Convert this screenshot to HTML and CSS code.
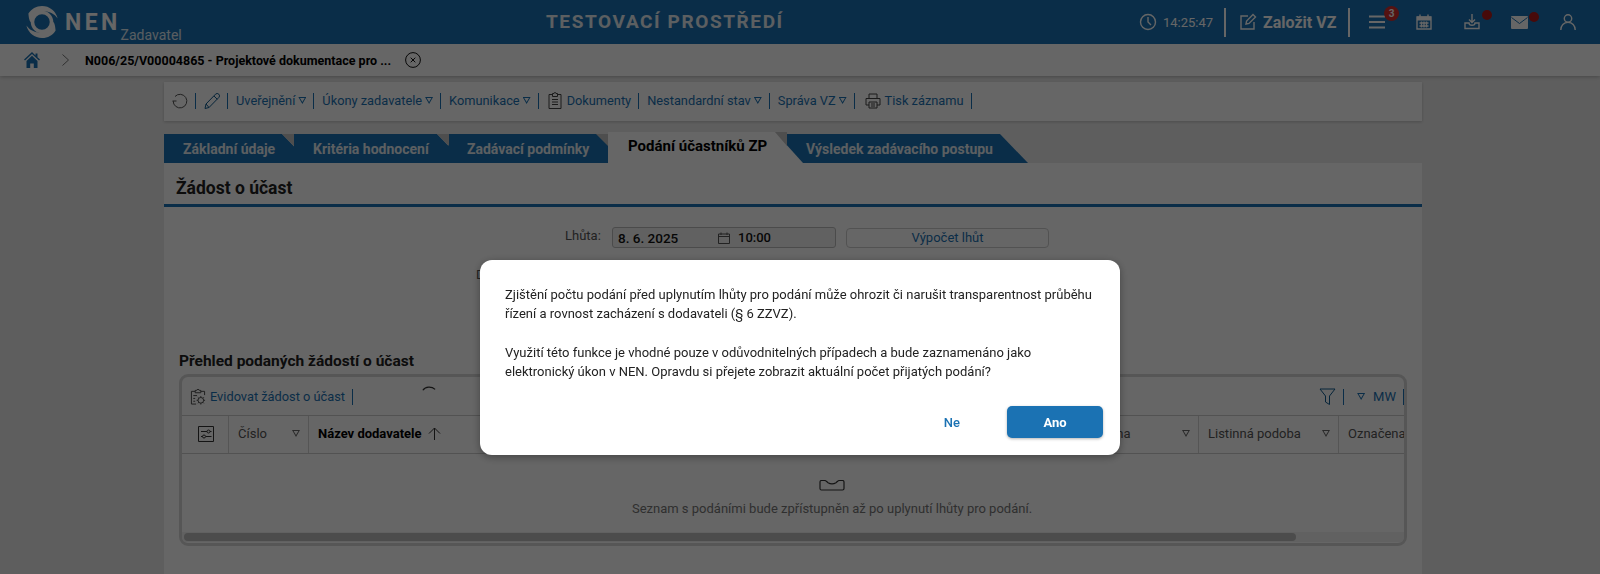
FILE: index.html
```html
<!DOCTYPE html>
<html lang="cs">
<head>
<meta charset="utf-8">
<title>NEN Zadavatel</title>
<link rel="stylesheet" href="styles.css">
</head>
<body>
<header class="topbar">
  <div class="brand">
    <svg class="logo" viewBox="0 0 32 32"><path d="M16 0a16 16 0 0 1 15.6 12.4C28 7.5 23 5.2 18 5.6 11 6.2 6.4 10.6 5.2 16.6 3.6 15 3 14 2.4 7.6 5.2 3 10.2 0 16 0Z"/><path d="M16 32A16 16 0 0 1 .4 19.6C4 24.500 9 26.800 14 26.400c7-.6 11.600-5 12.800-11 1.600 1.600 2.200 2.600 2.800 9C26.800 29 21.800 32 16 32Z"/><circle class="logo-ring" cx="16" cy="16" r="9.500"/></svg>
    <span class="brand-name">NEN</span>
    <span class="brand-role">Zadavatel</span>
  </div>
  <div class="env">TESTOVACÍ PROSTŘEDÍ</div>
  <div class="top-right">
    <svg class="ico ico-clock" viewBox="0 0 18 18"><circle cx="9" cy="9" r="7.500"/><path d="M9 4v5l3 3"/></svg>
    <span class="clock">14:25:47</span>
    <span class="top-sep"></span>
    <svg class="ico ico-new" viewBox="0 0 18 18"><path d="M9 3H2v13h13V9"/><path d="m7 11 .6-3L14 1.500 16.500 4 10 10.400Z"/></svg>
    <span class="new-vz">Založit VZ</span>
    <span class="top-sep sep-b"></span>
    <span class="top-icon menu-ico"><svg class="ico" viewBox="0 0 16 14"><path d="M0 1.500h16M0 7h16M0 12.500h16"/></svg><b class="badge">3</b></span>
    <span class="top-icon cal-ico"><svg class="ico ico-fill" viewBox="0 0 16 16"><path class="f" d="M1 2.500h14V6.500H1Z"/><path d="M1 3h14v12H1ZM4 .5v3M12 .5v3M3.500 9h9M3.500 12h9M5.500 7.500v6M8 7.500v6M10.500 7.500v6"/></svg></span>
    <span class="top-icon dl-ico"><svg class="ico" viewBox="0 0 16 16"><path d="M8 0v8M5 5.500 8 8.500 11 5.500"/><path d="M1 9v5.500h14V9h-4c0 3-6 3-6 0Z"/></svg><i class="dot"></i></span>
    <span class="top-icon mail-ico"><svg class="ico ico-fill" viewBox="0 0 17 13"><path class="f" d="M1 0h15a1 1 0 0 1 1 1v11a1 1 0 0 1-1 1H1a1 1 0 0 1-1-1V1a1 1 0 0 1 1-1Z"/><path class="m" d="m.5 1.500 8 6 8-6"/></svg><i class="dot"></i></span>
    <span class="top-icon user-ico"><svg class="ico" viewBox="0 0 16 16"><circle cx="8" cy="4.500" r="3.700"/><path d="M.8 16c0-4.500 3-7.600 7.200-7.600s7.200 3.100 7.200 7.600"/></svg></span>
  </div>
</header>

<nav class="crumbs">
  <svg class="home" viewBox="0 0 16 16"><path d="M8 0 0 7.500l1 1L8 2l7 6.500 1-1-2.500-2.300V1.500h-2v1.900Z"/><path d="M2.500 9 8 3.800 13.500 9v7H9.800v-4.500H6.200V16H2.500Z"/></svg>
  <svg class="chev" viewBox="0 0 7 12"><path d="m.5.500 6 5.500-6 5.500"/></svg>
  <span class="crumb-title">N006/25/V00004865 - Projektové dokumentace pro ...</span>
  <svg class="close-ico" viewBox="0 0 16 16"><circle cx="8" cy="8" r="7.400"/><path d="m5.700 5.700 4.600 4.600m0-4.600-4.600 4.600"/></svg>
</nav>

<main class="main">
  <div class="toolbar">
    <svg class="tool-ico refresh" viewBox="0 0 16 16"><path d="M3 3.500A6.800 6.800 0 1 1 1.200 8M.5 8h4"/></svg>
    <span class="vsep"></span>
    <svg class="tool-ico" viewBox="0 0 16 16"><path d="M1 15.500 2 11 11.500 1.200a1.700 1.700 0 0 1 3.300 3.300L5 14.500ZM2 11l3 3.500M10 3l3.300 3.300"/></svg>
    <span class="vsep"></span>
    <span class="tool">Uveřejnění<i class="caret"></i></span>
    <span class="vsep"></span>
    <span class="tool">Úkony zadavatele<i class="caret"></i></span>
    <span class="vsep"></span>
    <span class="tool">Komunikace<i class="caret"></i></span>
    <span class="vsep"></span>
    <svg class="tool-ico doc" viewBox="0 0 14 17"><path d="M4.500 2.500H1v14h12v-14H9.500M4.500 1.500h1.500a1 1 0 0 1 2 0h1.500v3h-5ZM4 7.500h6M4 10h6M4 12.500h6"/></svg>
    <span class="tool">Dokumenty</span>
    <span class="vsep"></span>
    <span class="tool">Nestandardní stav<i class="caret"></i></span>
    <span class="vsep"></span>
    <span class="tool">Správa VZ<i class="caret"></i></span>
    <span class="vsep"></span>
    <svg class="tool-ico print" viewBox="0 0 16 16"><path d="M4 5V1h8v4M4 12H1V5.500h14V12h-3M4 9h8v6H4ZM6 11h4M6 13h4"/></svg>
    <span class="tool">Tisk záznamu</span>
    <span class="vsep"></span>
  </div>

  <div class="tabs">
    <span class="tab t1">Základní údaje</span>
    <span class="tab t2">Kritéria hodnocení</span>
    <span class="tab t3">Zadávací podmínky</span>
    <span class="tab active">Podání účastníků ZP</span>
    <span class="tab t5">Výsledek zadávacího postupu</span>
    <i class="fold f1"></i>
    <i class="fold f2"></i>
    <i class="fold f3"></i>
    <i class="fold f4"></i>
  </div>

  <section class="panel">
    <h1 class="panel-title">Žádost o účast</h1>
    <div class="form-row">
      <label class="form-label">Lhůta:</label>
      <div class="date-field">
        <span class="date-val">8. 6. 2025</span>
        <svg class="cal-small" viewBox="0 0 12 12"><path d="M.5 2h11v9.500H.5ZM.5 4.500h11M3 .5v2.500M9 .5v2.500"/></svg>
        <span class="time-val">10:00</span>
      </div>
      <button class="calc-btn">Výpočet lhůt</button>
    </div>
    <div class="form-row2">Datum zjištění</div>

    <h2 class="list-title">Přehled podaných žádostí o účast</h2>
    <div class="grid-box">
      <div class="grid-tools">
        <svg class="tool-ico evid" viewBox="0 0 16 17"><path d="M5 2.500H1v13.500h5M11 2.500h4v4M5 1.500h1.500a1.500 1 0 0 1 3 0H11v2.500H5ZM3 7h4M3 10h2M3 13h2"/><circle cx="11" cy="12" r="3"/><path d="M11 7.500v1.500M11 15v1.500M6.500 12H8M14 12h1.500M7.800 8.800l1 1M13.200 14.200l1 1M14.200 8.800l-1 1M8.800 14.200l-1 1"/></svg>
        <span class="tool evid-t">Evidovat žádost o účast</span>
        <span class="vsep"></span>
        <svg class="spinner" viewBox="0 0 16 8"><path d="M1 6c3-4.500 10-4.500 14-1"/></svg>
        <span class="grid-tools-right">
          <svg class="tool-ico filter" viewBox="0 0 17 17"><path d="M1 1h15l-5.500 7v8.500L6.500 14V8Z"/></svg>
          <span class="vsep"></span>
          <i class="caret mw-caret"></i>
          <span class="tool mw">MW</span>
          <span class="vsep vsep-end"></span>
        </span>
      </div>
      <div class="grid-head">
        <div class="col c-set"><svg class="set-ico" viewBox="0 0 16 16"><path d="M.5.500h15v15H.5ZM3 5.500h6M12 5.500h1.500M3 10.500h1.500M8 10.500h5.500"/><circle cx="10.500" cy="5.500" r="1.500"/><circle cx="6" cy="10.500" r="1.500"/></svg></div>
        <div class="col c-num">Číslo<i class="caret"></i></div>
        <div class="col c-name"><b>Název dodavatele</b><svg class="arrow" viewBox="0 0 13 13"><path d="M6.500 13V1M1 6.500l5.500-5.500L12 6.500"/></svg></div>
        <div class="col c-fill">Doručena<i class="caret"></i></div>
        <div class="col c-list">Listinná podoba<i class="caret"></i></div>
        <div class="col c-last">Označena</div>
      </div>
      <div class="grid-empty">
        <svg class="tray" viewBox="0 0 26 11"><path d="M1 2c0-1 .5-1.500 1.500-1.500h3C7 .5 7.500 1.500 9 2.700c2.500 1.500 5.500 1.500 8 0C18.500 1.500 19 .5 20.500.5h3c1 0 1.500.5 1.500 1.500v6.500c0 1-.5 1.500-1.500 1.500h-21C1.500 10 1 9.500 1 8.500Z"/></svg>
        <p class="empty-text">Seznam s podáními bude zpřístupněn až po uplynutí lhůty pro podání.</p>
      </div>
      <div class="scroll-track"><div class="scroll-thumb"></div></div>
    </div>
  </section>
</main>

<div class="backdrop"></div>
<div class="modal" role="dialog">
  <p class="modal-p">Zjištění počtu podání před uplynutím lhůty pro podání může ohrozit či narušit transparentnost průběhu řízení a rovnost zacházení s dodavateli (§ 6 ZZVZ).</p>
  <p class="modal-p">Využití této funkce je vhodné pouze v odůvodnitelných případech a bude zaznamenáno jako elektronický úkon v NEN. Opravdu si přejete zobrazit aktuální počet přijatých podání?</p>
  <div class="modal-actions">
    <button class="btn-ne">Ne</button>
    <button class="btn-ano">Ano</button>
  </div>
</div>
</body>
</html>
```

FILE: styles.css
```css
* { box-sizing: border-box; }
html, body { margin: 0; height: 574px; overflow: hidden; }
body { background: #ececec; font-family: Roboto, "Liberation Sans", sans-serif; color: #222; font-size: 13px; }
svg { display: block; flex: none; fill: none; }

.topbar { height: 44px; background: #1b72b3; display: flex; align-items: center; color: #fff; position: relative; z-index: 3; }
.brand { width: 546px; flex: none; display: flex; align-items: flex-start; height: 44px; padding-left: 26px; }
.logo { width: 32px; height: 32px; margin-top: 6px; fill: #fff; }
.logo-ring { fill: none; stroke: #fff; stroke-width: 3.5; }
.brand-name { font-weight: 700; font-size: 23px; letter-spacing: 3.4px; line-height: 46px; margin-left: 7px; height: 44px; }
.brand-role { font-size: 14px; margin-left: 0; margin-top: 27px; line-height: 16px; opacity: .85; }
.env { font-size: 19px; font-weight: 700; letter-spacing: 1.6px; line-height: 46px; color: #e6edf3; width: 594px; flex: none; }
.top-right { display: flex; align-items: center; height: 44px; }
.ico { stroke: #fff; stroke-width: 1.4; fill: none; }
.ico-clock { width: 18px; height: 18px; margin-left: -1px; }
.clock { font-size: 13px; margin-left: 6px; width: 49px; }
.top-sep { width: 2px; height: 29px; background: #fff; margin-left: 12px; }
.sep-b { margin-left: 12px; }
.ico-new { width: 18px; height: 18px; margin-left: 13px; }
.new-vz { font-size: 16px; font-weight: 700; margin-left: 6px; width: 73px; white-space: nowrap; }
.top-icon { position: relative; display: block; }
.top-icon .ico { width: 16px; height: 16px; }
.menu-ico { margin-left: 19px; }
.menu-ico .ico { height: 14px; stroke-width: 1.8; }
.cal-ico { margin-left: 31px; }
.dl-ico { margin-left: 32px; }
.mail-ico { margin-left: 31px; }
.mail-ico .ico { width: 17px; height: 13px; }
.user-ico { margin-left: 32px; }
.user-ico .ico { width: 16px; height: 16px; }
.ico-fill .f { fill: #fff; stroke: none; }
.ico-fill .m { stroke: #1b72b3; stroke-width: 1; }
.badge { position: absolute; left: 15px; top: -9px; width: 15px; height: 15px; border-radius: 50%; background: #d12e2e; color: #fff; font-size: 10px; line-height: 15px; text-align: center; }
.dot { position: absolute; left: 18px; top: -4px; width: 10px; height: 10px; border-radius: 50%; background: #b11a1a; }

.crumbs { height: 32px; background: #fff; display: flex; align-items: center; padding-left: 24px; box-shadow: 0 1px 4px rgba(0,0,0,.25); position: relative; z-index: 2; }
.home { width: 16px; height: 16px; fill: #1b72b3; }
.chev { width: 7px; height: 12px; margin-left: 22px; stroke: #777; stroke-width: 1; }
.crumb-title { font-weight: 700; font-size: 12.500px; color: #000; margin-left: 16px; width: 320px; white-space: nowrap; }
.close-ico { width: 16px; height: 16px; stroke: #111; stroke-width: 1; }

.main { width: 1258px; margin: 6px 0 0 164px; }
.toolbar { height: 39px; background: #fff; display: flex; align-items: center; padding: 0 0 2px 8px; box-shadow: 0 1px 3px rgba(0,0,0,.2); }
.tool-ico { width: 16px; height: 16px; stroke: #0f5a8e; stroke-width: 1; }
.refresh { stroke: #555; }
.doc { width: 14px; height: 17px; margin-left: 1px; stroke: #444; }
.print { stroke: #444; margin-left: 2px; }
.vsep { width: 1px; height: 16px; background: #1b72b3; margin: 0 8px 0 7px; flex: none; }
.tool { color: #1b72b3; font-size: 12.800px; white-space: nowrap; display: flex; align-items: center; }
.doc + .tool { margin-left: 5px; }
.print + .tool { margin-left: 4px; }
.caret { display: block; width: 8px; height: 7px; margin-left: 3px; flex: none; background: #1b72b3; clip-path: polygon(0 0, 100% 0, 50% 100%, 0 0, 20% 15%, 50% 72%, 80% 15%, 20% 15%); }

.tabs { display: flex; align-items: flex-end; height: 31px; margin-top: 11px; position: relative; }
.tab { position: relative; height: 29px; background: #1b72b3; color: #e5edf3; font-weight: 700; font-size: 14px; line-height: 30px; padding-left: 19px; white-space: nowrap; clip-path: polygon(0 0, calc(100% - 28px) 0, 100% 100%, 0 100%); }
.t1 { width: 146px; margin-right: -16px; z-index: 4; }
.t2 { width: 171px; margin-right: -17px; z-index: 3; }
.t3 { width: 176px; margin-right: -16px; z-index: 2; clip-path: none; }
.active { width: 195px; height: 31px; margin-right: -16px; z-index: 5; background: #fff; color: #000; font-size: 15px; line-height: 29px; padding-left: 20px; }
.t5 { width: 241px; z-index: 1; }
.fold { position: absolute; width: 12px; height: 12px; top: 2px; background: #c4c4c4; clip-path: polygon(0 0, 100% 100%, 100% 0); z-index: 6; }
.f1 { left: 118px; }
.f2 { left: 273px; }
.f3 { left: 432px; }
.f4 { left: 611px; top: 0; height: 14px; }

.panel { background: #fff; height: 420px; }
.panel-title { margin: 0; height: 44px; border-bottom: 3px solid #1b72b3; font-size: 17.500px; font-weight: 700; line-height: 50px; padding-left: 12px; color: #222; }
.form-row { display: flex; align-items: center; height: 21px; margin-top: 20px; padding-left: 401px; }
.form-label { color: #555; font-size: 13px; width: 47px; margin-top: -4px; }
.date-field { width: 224px; height: 21px; border: 1px solid #bbb; border-radius: 3px; background: #f2f2f2; display: flex; align-items: center; padding-left: 5px; }
.date-val { width: 100px; font-size: 13.500px; font-weight: 500; color: #111; }
.cal-small { width: 12px; height: 12px; stroke: #555; stroke-width: 1; }
.time-val { margin-left: 8px; font-size: 13px; font-weight: 500; color: #111; }
.calc-btn { width: 203px; height: 20px; margin-left: 10px; background: #fff; border: 1px solid #ccc; border-radius: 4px; color: #1b72b3; font: 13px Roboto, sans-serif; padding: 0; }
.form-row2 { margin-top: 19px; padding-left: 312px; height: 16px; color: #555; font-size: 13px; }
.list-title { margin: 67px 0 0; font-size: 15.500px; font-weight: 700; line-height: 22px; padding-left: 15px; color: #222; height: 22px; }
.grid-box { margin: 2px 15px 0; height: 172px; border: 3px solid #d8d8d8; border-radius: 9px; background: #fff; overflow: hidden; }
.grid-tools { height: 39px; display: flex; align-items: center; padding: 1px 0 0 8px; border-bottom: 1px solid #ccc; position: relative; }
.evid { stroke: #444; }
.evid-t { margin-left: 4px; }
.spinner { position: absolute; left: 240px; top: 8px; width: 14px; height: 7px; stroke: #333; stroke-width: 1.5; }
.grid-tools-right { margin-left: auto; display: flex; align-items: center; }
.filter { width: 17px; height: 17px; }
.mw-caret { margin: 0 8px 0 5px; }
.mw { font-size: 13px; }
.vsep-end { margin-right: 0; }
.grid-head { height: 38px; display: flex; border-bottom: 1px solid #ccc; overflow: hidden; background: #fff; }
.col { flex: none; display: flex; align-items: center; border-right: 1px solid #d5d5d5; padding: 0 0 2px 9px; color: #555; font-size: 13px; white-space: nowrap; position: relative; }
.col .caret { position: absolute; right: 8px; top: 14px; background: #666; }
.c-set { width: 47px; padding-left: 16px; }
.set-ico { width: 16px; height: 16px; stroke: #333; stroke-width: 1; }
.c-num { width: 80px; }
.c-name { width: 250px; }
.c-name b { color: #000; font-weight: 700; margin-right: 6px; }
.arrow { width: 13px; height: 13px; stroke: #333; stroke-width: 1; }
.c-fill { width: 640px; padding-left: 516px; }
.c-list { width: 140px; }
.c-last { border-right: 0; width: 80px; }
.grid-empty { height: 78px; display: flex; flex-direction: column; align-items: center; padding: 26px 0 0 78px; }
.tray { width: 26px; height: 11px; stroke: #333; stroke-width: 1.200; }
.empty-text { margin: 10px 0 0; font-size: 13px; color: #777; line-height: 16px; }
.scroll-track { height: 10px; background: #f2f2f2; padding: 1px 1px 0 2px; }
.scroll-thumb { width: 1112px; height: 8px; border-radius: 4px; background: #bdbdbd; }

.backdrop { position: fixed; inset: 0; background: rgba(0,0,0,.6); z-index: 10; }
.modal { position: fixed; left: 480px; top: 260px; width: 640px; height: 195px; background: #fff; border-radius: 12px; z-index: 11; padding: 25px 25px 0; box-shadow: 0 2px 8px rgba(0,0,0,.35); }
.modal-p { margin: 0 0 19px; font-size: 13px; line-height: 19.300px; color: #222; }
.modal-actions { display: flex; align-items: center; justify-content: flex-end; margin: 25px -8px 0 0; }
.btn-ne { background: none; border: 0; color: #1b72b3; font: 500 13px Roboto, sans-serif; margin-right: 47px; padding: 0; }
.btn-ano { width: 96px; height: 32px; background: #1b72b3; color: #fff; border: 0; border-radius: 5px; font: 700 13px Roboto, sans-serif; box-shadow: 0 1px 3px rgba(0,0,0,.3); }
```
